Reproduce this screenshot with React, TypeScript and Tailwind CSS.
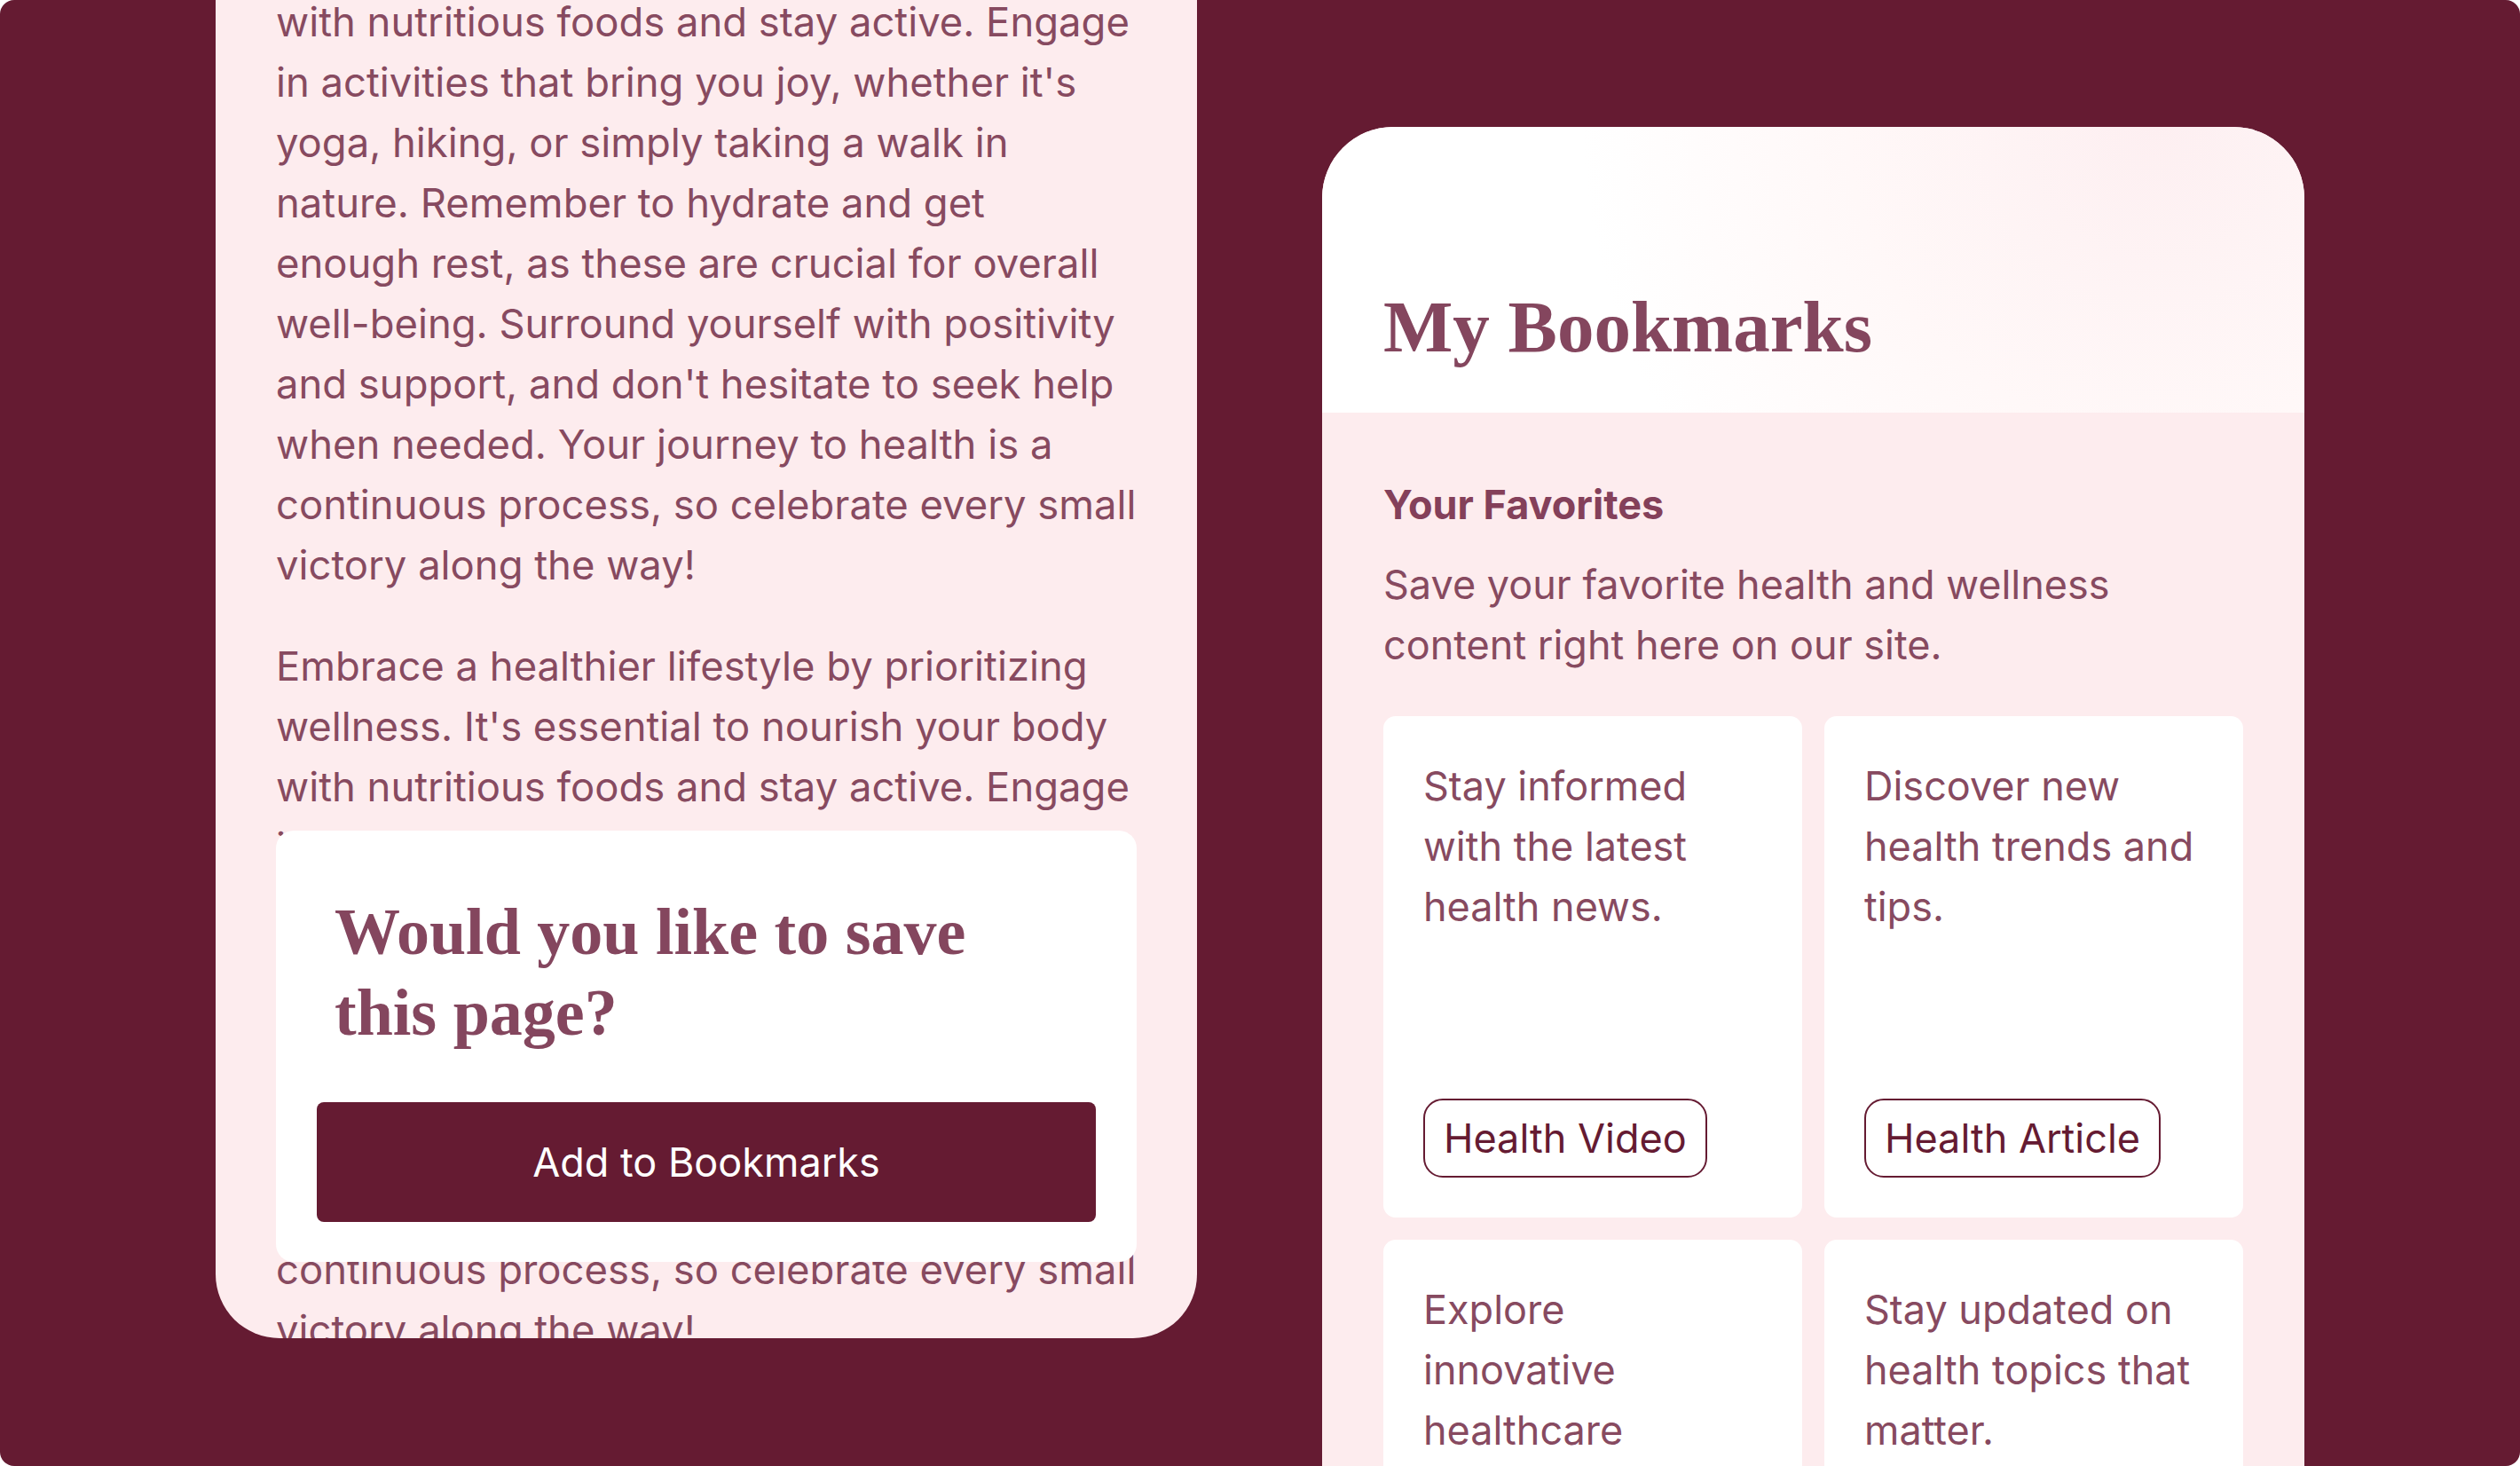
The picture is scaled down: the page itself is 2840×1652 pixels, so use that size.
import React from 'react';

const body = "font-['Inter',_'Noto_Sans',_sans-serif]";
const serif = "font-['Liberation_Serif',_'Times_New_Roman',_serif]";

const ARTICLE =
  "Embrace a healthier lifestyle by prioritizing wellness. It's essential to nourish your body with nutritious foods and stay active. Engage in activities that bring you joy, whether it's yoga, hiking, or simply taking a walk in nature. Remember to hydrate and get enough rest, as these are crucial for overall well-being. Surround yourself with positivity and support, and don't hesitate to seek help when needed. Your journey to health is a continuous process, so celebrate every small victory along the way!";

const FAVORITES: { lines: string[]; tag?: string }[] = [
  { lines: ['Stay informed', 'with the latest', 'health news.'], tag: 'Health Video' },
  { lines: ['Discover new', 'health trends and', 'tips.'], tag: 'Health Article' },
  { lines: ['Explore', 'innovative', 'healthcare', 'solutions.'] },
  { lines: ['Stay updated on', 'health topics that', 'matter.'] },
];

function ArticlePanel() {
  return (
    <div className="relative w-[1106px] h-[1508px] shrink-0 overflow-hidden rounded-b-[72px] bg-[#fdecee]">
      {/* scrolled article */}
      <div className={`${body} -mt-[145px] px-[68px] text-[45.4px] leading-[68px] text-[#874a60]`}>
        {[0, 1, 2].map((i) => (
          <p key={i} className="mb-[46px]">
            {ARTICLE}
          </p>
        ))}
      </div>

      {/* save prompt */}
      <div className="absolute left-[68px] right-[68px] bottom-[86px] flex flex-col rounded-[20px] bg-white px-[46px] pt-[69px] pb-[45px]">
        <h2 className={`${serif} ml-[20px] text-[74px] leading-[91px] font-bold text-[#84465e]`}>
          Would you like to save
          <br />
          this page?
        </h2>
        <button
          className={`${body} mt-[55px] h-[135px] w-full rounded-[8px] bg-[#651b32] text-[45px] text-white`}
        >
          Add to Bookmarks
        </button>
      </div>
    </div>
  );
}

function BookmarksPanel() {
  return (
    <div className="mt-[143px] w-[1107px] shrink-0 self-start overflow-hidden rounded-t-[80px] bg-[#fdecee]">
      <header className="h-[322px] bg-[radial-gradient(circle_at_85%_0%,#fdeff1_0%,#fff8f8_35%,#ffffff_65%)] px-[69px] pt-[175px]">
        <h1 className={`${serif} text-[83px] leading-[100px] font-bold text-[#84465e]`}>My Bookmarks</h1>
      </header>

      <section className={`${body} px-[69px] pt-[70px] text-[#874a60]`}>
        <h3 className="text-[45px] leading-[68px] font-bold text-[#84405a]">Your Favorites</h3>
        <p className="mt-[22px] text-[45px] leading-[68px]">
          Save your favorite health and wellness content right here on our site.
        </p>

        <div className="mt-[46px] grid grid-cols-2 gap-[25px]">
          {FAVORITES.map((f) => (
            <div
              key={f.lines[0]}
              className="flex h-[565px] flex-col justify-between rounded-[14px] bg-white p-[45px]"
            >
              <p className="whitespace-nowrap text-[45px] leading-[68px]">
                {f.lines.map((l, i) => (
                  <React.Fragment key={l}>
                    {i > 0 && <br />}
                    {l}
                  </React.Fragment>
                ))}
              </p>
              {f.tag && (
                <span className="inline-flex h-[89px] items-center self-start rounded-[22px] border-2 border-[#651b32] px-[21px] text-[45px] text-[#651b32]">
                  {f.tag}
                </span>
              )}
            </div>
          ))}
        </div>
      </section>
    </div>
  );
}

export default function App() {
  return (
    <div className="h-[1652px] w-[2840px] bg-white">
      <div className="flex h-full w-full gap-[141px] overflow-hidden rounded-[16px] bg-[#651b32] pl-[243px]">
        <ArticlePanel />
        <BookmarksPanel />
      </div>
    </div>
  );
}
